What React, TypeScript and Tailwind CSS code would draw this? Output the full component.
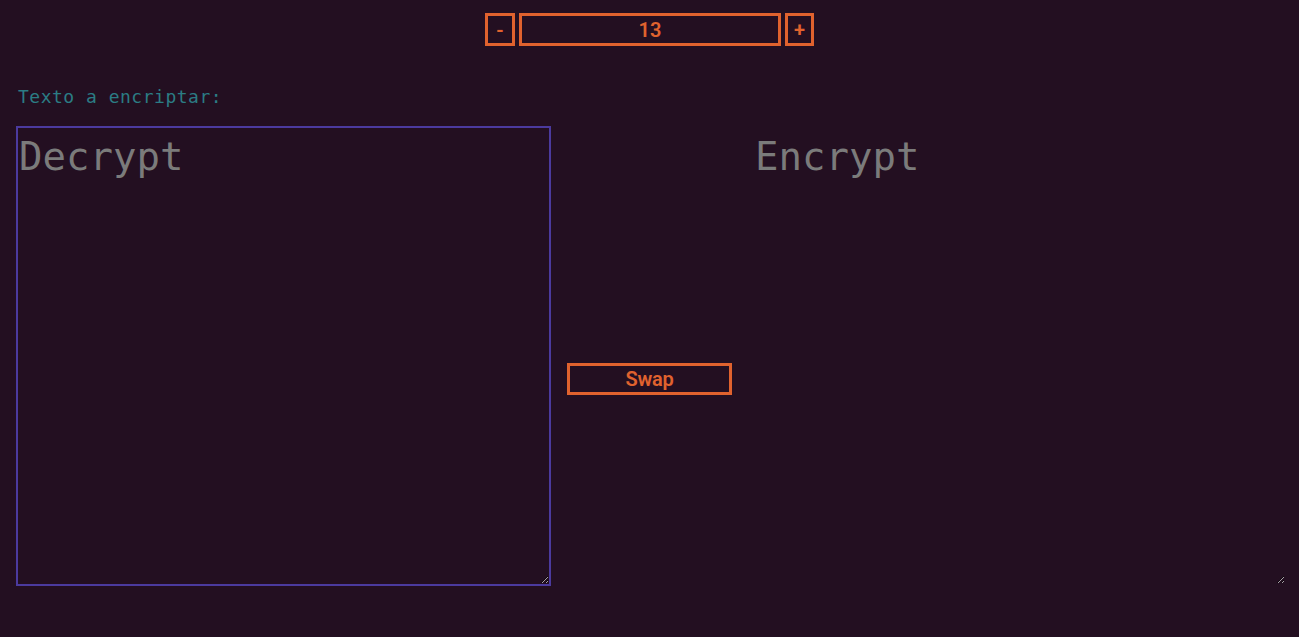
import { useState } from 'react';

export default function App() {
  const [shift, setShift] = useState(13);
  const [plain, setPlain] = useState('');
  const [cipher, setCipher] = useState('');

  const btn =
    'border-[3px] border-[#e0622e] text-[#e0622e] font-semibold text-[20px] leading-none bg-transparent';
  const mono = { fontFamily: '"DejaVu Sans Mono", monospace' };

  return (
    <div
      className="min-h-[637px] w-full bg-[#230f21] pl-4 pr-3 pt-[13px]"
      style={{ fontFamily: 'Roboto, "Noto Sans", sans-serif' }}
    >
      <div className="flex justify-center gap-[4px] pr-[4px]">
        <button className={`${btn} w-[30px] h-[33px]`} onClick={() => setShift(shift - 1)}>
          -
        </button>
        <input
          className={`${btn} w-[262px] h-[33px] text-center outline-none`}
          value={shift}
          onChange={(e) => setShift(Number(e.target.value) || 0)}
        />
        <button className={`${btn} w-[29px] h-[33px]`} onClick={() => setShift(shift + 1)}>
          +
        </button>
      </div>

      <div
        className="mt-[40px] pl-[2px] text-[18px] leading-[22px] tracking-[0.5px] text-[#2b7c84]"
        style={mono}
      >
        Texto a encriptar:
      </div>

      <div className="mt-[18px] flex items-center">
        <textarea
          className="w-[535px] h-[460px] border-2 border-[#4b3a9e] bg-transparent pl-[1px] pt-[4px] text-[39px] leading-[50px] text-[#c9c9c9] placeholder:text-[#7b7b7b] caret-[#c8b43a] outline-none"
          style={mono}
          placeholder="Decrypt"
          autoFocus
          value={plain}
          onChange={(e) => setPlain(e.target.value)}
        />
        <div className="flex-1 pl-[16px]">
          <button className={`${btn} mt-[46px] w-[165px] h-[32px] tracking-[-0.3px]`}>Swap</button>
        </div>
        <textarea
          className="w-[535px] h-[460px] border-2 border-transparent bg-transparent pl-[1px] pt-[4px] text-[39px] leading-[50px] text-[#c9c9c9] placeholder:text-[#7b7b7b] outline-none"
          style={mono}
          placeholder="Encrypt"
          value={cipher}
          onChange={(e) => setCipher(e.target.value)}
        />
      </div>
    </div>
  );
}
